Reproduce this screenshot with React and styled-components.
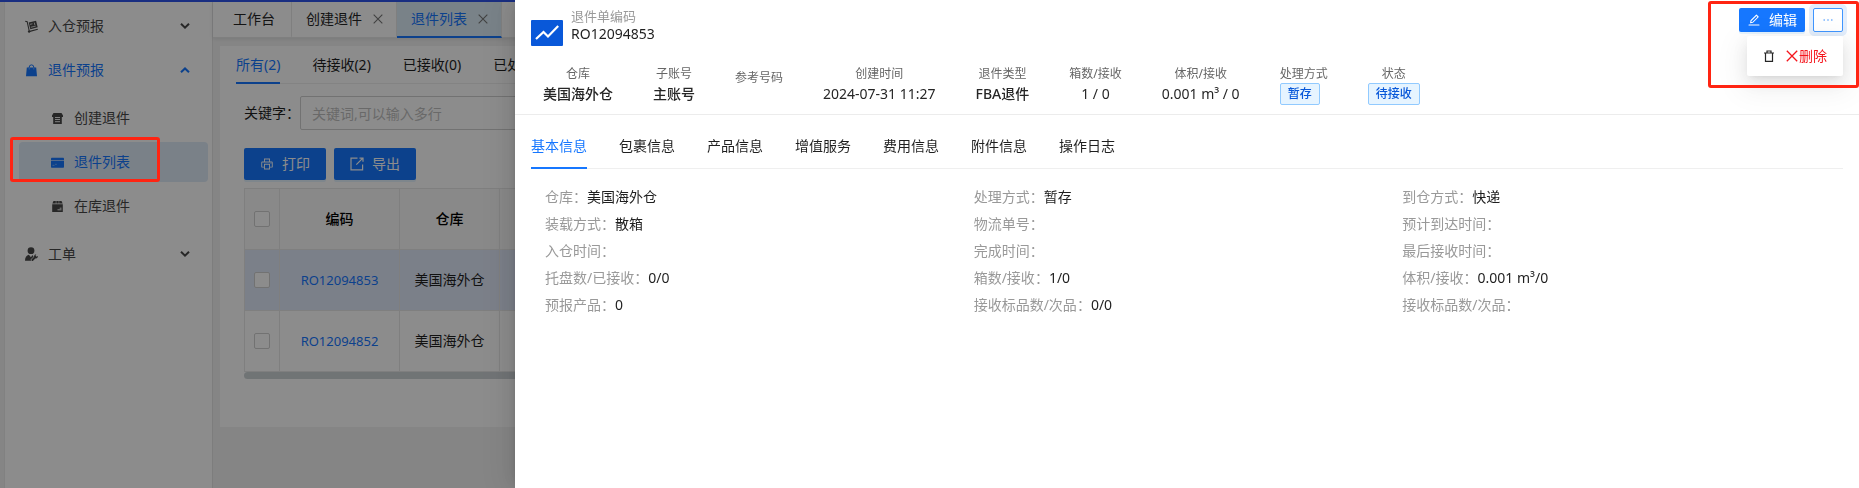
import React, { useState } from "react";
import styled, { createGlobalStyle } from "styled-components";
import { AiOutlineEdit, AiOutlineEllipsis, AiOutlinePrinter } from "react-icons/ai";

const GlobalStyle = createGlobalStyle`
  *, *::before, *::after {
    box-sizing: border-box;
  }

  body {
    margin: 0;
    background: #f3f3f3;
    color: #1f1f1f;
    font-family: "Noto Sans", "Noto Sans CJK SC", sans-serif;
    font-size: 14px;
    line-height: 22px;
  }

  button, input {
    font: inherit;
  }

  svg {
    display: block;
    flex: none;
  }
`;

const Shell = styled.div`
  display: flex;
  min-height: 100vh;
  overflow: hidden;
  border-top: 2px solid #2f54eb;
`;

/* ---------- sidebar ---------- */

const Sidebar = styled.nav`
  flex: none;
  width: 209px;
  margin-left: 4px;
  padding: 4px 4px 0 14px;
  background: #fff;
  border-left: 1px solid #ececec;
  border-right: 1px solid #e4e4e4;
`;

const Menu = styled.ul`
  display: flex;
  flex-direction: column;
  gap: 4px;
  margin: 0;
  padding: ${(p) => (p.$sub ? "8px 0 4px" : "0")};
  list-style: none;
`;

const MenuItem = styled.li`
  position: relative;
`;

const MenuGroup = styled.button`
  display: flex;
  align-items: center;
  width: 100%;
  height: 40px;
  padding: 0 18px 0 6px;
  border: 0;
  background: none;
  color: ${(p) => (p.$open ? "#1677ff" : "#484848")};
  cursor: pointer;

  span {
    flex: 1;
    margin-left: 10px;
    text-align: left;
  }
`;

const MenuLink = styled.a`
  display: flex;
  align-items: center;
  gap: 10px;
  height: 40px;
  padding-left: 32px;
  border-radius: 4px;
  background: ${(p) => (p.$active ? "#deebf8" : "none")};
  color: ${(p) => (p.$active ? "#1677ff" : "#484848")};
  text-decoration: none;
`;

/* red frame drawn above everything to point at a part of the page */
const Highlight = styled.div`
  position: absolute;
  z-index: 30;
  border: 3px solid #ff2412;
  border-radius: 3px;
  pointer-events: none;
`;

const MenuHighlight = styled(Highlight)`
  top: -5px;
  bottom: 0;
  left: -9px;
  right: 48px;
`;

const ActionHighlight = styled(Highlight)`
  top: -7px;
  bottom: -56px;
  left: -31px;
  right: -16px;
`;

/* ---------- page behind the drawer ---------- */

const Main = styled.main`
  flex: 1;
  min-width: 0;
`;

const PageTabs = styled.div`
  display: flex;
  height: 36px;
  background: #fff;
  border-bottom: 1px solid #e8e8e8;
  box-shadow: 0 1px 4px rgba(0, 21, 41, 0.1);
`;

const PageTab = styled.a`
  display: flex;
  align-items: center;
  gap: 11px;
  height: 36px;
  padding: 0 ${(p) => (p.$closable ? "13px" : "16px")} 0 ${(p) => (p.$closable ? "14px" : "20px")};
  border-right: 1px solid #e8e8e8;
  border-bottom: 2px solid ${(p) => (p.$active ? "#1677ff" : "transparent")};
  background: ${(p) => (p.$active ? "#dcedf7" : "none")};
  color: ${(p) => (p.$active ? "#1677ff" : "#262626")};
  text-decoration: none;
  white-space: nowrap;

  svg {
    color: #777;
  }
`;

const Card = styled.section`
  margin: 8px 8px 0 7px;
  padding: 0 16px 48px;
  background: #fff;
`;

const Tabs = styled.div`
  display: flex;
  gap: 32px;
  border-bottom: 1px solid #efefef;
`;

const Tab = styled.button`
  flex: none;
  margin: 0 0 -1px;
  padding: ${(p) => (p.$roomy ? "20px 0 10px" : "8px 0 6px")};
  border: 0;
  border-bottom: 2px solid ${(p) => (p.$active ? "#1677ff" : "transparent")};
  background: none;
  color: ${(p) => (p.$active ? "#1677ff" : "#1f1f1f")};
  cursor: pointer;
  white-space: nowrap;
`;

const Search = styled.label`
  display: flex;
  align-items: center;
  margin: 12px 8px 0;
  white-space: nowrap;
`;

const SearchInput = styled.input`
  flex: 1;
  min-width: 0;
  height: 34px;
  padding: 0 11px;
  border: 1px solid #d0d0d0;
  border-radius: 2px;
  background: #fff;

  &::placeholder {
    color: #bfbfbf;
    opacity: 1;
  }
`;

const Toolbar = styled.div`
  display: flex;
  gap: 8px;
  margin: 18px 8px 8px;
`;

const PrimaryButton = styled.button`
  display: flex;
  align-items: center;
  justify-content: center;
  gap: 8px;
  height: ${(p) => (p.$small ? "24px" : "32px")};
  padding: 0 ${(p) => (p.$small ? "8px" : "16px")};
  border: 0;
  border-radius: 2px;
  background: #1677ff;
  box-shadow: 0 2px 0 rgba(5, 145, 255, 0.1);
  color: #fff;
  cursor: pointer;
`;

const TableWrap = styled.div`
  margin: 0 8px;
  overflow: hidden;
`;

const Table = styled.table`
  width: 100%;
  min-width: 1300px;
  border-collapse: separate;
  border-spacing: 0;
  table-layout: fixed;
  border-top: 1px solid #e8e8e8;
  border-left: 1px solid #e8e8e8;

  th,
  td {
    height: 61px;
    padding: 0;
    border-right: 1px solid #e8e8e8;
    border-bottom: 1px solid #e8e8e8;
    text-align: center;
  }

  th {
    background: #fafafa;
    color: #000;
    font-weight: 500;
  }

  a {
    color: #1677ff;
    font-size: 13px;
    text-decoration: none;
  }
`;

const Row = styled.tr`
  background: ${(p) => (p.$selected ? "#e1e9fa" : "none")};
`;

const Checkbox = styled.input`
  display: block;
  appearance: none;
  width: 16px;
  height: 16px;
  margin: 0 auto;
  border: 1px solid #cfcfcf;
  border-radius: 2px;
  background: #fff;
`;

const ScrollThumb = styled.div`
  height: 7px;
  border-radius: 4px 0 0 4px;
  background: #cdd3d6;
`;

/* ---------- drawer ---------- */

const Mask = styled.div`
  position: fixed;
  inset: 0;
  z-index: 10;
  background: rgba(0, 0, 0, 0.45);
`;

const Drawer = styled.aside`
  position: fixed;
  top: 0;
  right: 0;
  bottom: 0;
  left: 515px;
  z-index: 20;
  background: #fff;
  box-shadow: -6px 0 16px rgba(0, 0, 0, 0.08), -3px 0 6px -4px rgba(0, 0, 0, 0.12),
    -9px 0 28px 8px rgba(0, 0, 0, 0.05);
`;

const DrawerHeader = styled.header`
  display: flex;
  align-items: flex-start;
  justify-content: space-between;
  padding: 7px 16px 0;
`;

const Title = styled.div`
  display: flex;
  align-items: flex-start;
  gap: 8px;
`;

const Logo = styled.svg`
  width: 32px;
  height: 26px;
  margin-top: 13px;
`;

const TitleText = styled.div`
  display: flex;
  flex-direction: column;
  line-height: 18px;
`;

const TitleLabel = styled.span`
  color: #999;
  font-size: 13px;
`;

const Actions = styled.div`
  position: relative;
  display: flex;
  gap: 8px;
  margin-top: 1px;
`;

const MoreButton = styled.button`
  display: flex;
  align-items: center;
  justify-content: center;
  width: 30px;
  height: 24px;
  padding: 0;
  border: 1px solid #4096ff;
  border-radius: 2px;
  background: #fff;
  box-shadow: 0 0 0 4px #e3eefc;
  color: #4096ff;
  cursor: pointer;
`;

const Dropdown = styled.div`
  position: absolute;
  top: 28px;
  right: 0;
  z-index: 1;
  padding: 4px;
  border-radius: 2px;
  background: #fff;
  box-shadow: 0 6px 16px rgba(0, 0, 0, 0.08), 0 3px 6px -4px rgba(0, 0, 0, 0.12),
    0 9px 28px 8px rgba(0, 0, 0, 0.05);
`;

const DropdownItem = styled.button`
  display: flex;
  align-items: center;
  justify-content: space-between;
  width: 88px;
  height: 32px;
  padding: 0 12px;
  border: 0;
  background: none;
  color: #f5151c;
  cursor: pointer;

  span {
    display: flex;
    align-items: center;
    gap: 1px;
  }
`;

const Stats = styled.dl`
  display: flex;
  gap: 40px;
  height: 69px;
  margin: 0;
  padding: 18px 28px 0;
  border-bottom: 1px solid #ececec;
  white-space: nowrap;
`;

const Stat = styled.div`
  padding-top: ${(p) => (p.$empty ? "5px" : "1px")};
  text-align: center;

  dt {
    color: #666;
    font-size: 12px;
    line-height: 18px;
  }

  dd {
    display: flex;
    justify-content: ${(p) => (p.$start ? "flex-start" : "center")};
    margin: 0;
    color: #262626;
    font-weight: ${(p) => (p.$strong ? 500 : 400)};
  }
`;

const Tag = styled.span`
  padding: 0 7px;
  border: 1px solid #91caff;
  border-radius: 2px;
  background: #e6f4ff;
  color: #0958d9;
  font-size: 12px;
  font-weight: 500;
  line-height: 20px;
`;

const DrawerBody = styled.div`
  padding: 0 16px;
`;

const Details = styled.dl`
  display: grid;
  grid-template-columns: repeat(3, 1fr);
  grid-auto-rows: 27px;
  margin: 14px 0 0;
  padding: 0 12px 0 14px;
`;

const Detail = styled.div`
  display: flex;
  align-items: center;

  dt {
    color: #999;
  }

  dd {
    margin: 0;
  }
`;

const Chevron = ({ up }) => (
  <svg width="10" height="6" viewBox="0 0 10 6" fill="none" stroke="currentColor" strokeWidth="2">
    <path d={up ? "M1 5.2 5 1.4l4 3.8" : "M1 .8 5 4.6 9 .8"} />
  </svg>
);

const TruckIcon = () => (
  <svg width="13" height="13" viewBox="0 0 12 12" fill="none" stroke="currentColor">
    <path d="M.2 1.2 2 1.6 4 10.6" strokeWidth="1" />
    <path d="m3.4 2.3 6.8-1.7 1.5 6.2-6.8 1.7z" fill="currentColor" stroke="none" />
    <path d="m4.6 4 2.3-.5M8.6 2.4l.5 2.3M5.4 6.7l4.5-1.1" stroke="#fff" strokeWidth=".7" />
    <path d="m4.4 10.5 7.4-2" strokeWidth="1.1" />
    <circle cx="3.8" cy="10.7" r="1.1" fill="currentColor" stroke="none" />
  </svg>
);

const BagIcon = () => (
  <svg width="13" height="13" viewBox="0 0 13 13">
    <path d="M1.8 3.500h9.400l.8 8.700H1z" fill="currentColor" />
    <path d="M4.200 5.500V3.200a2.300 2.300 0 0 1 4.600 0v2.300" fill="none" stroke="currentColor" />
    <path d="M4.200 3.800v1.700M8.800 3.800v1.700" stroke="#9cc4ff" strokeWidth=".7" />
  </svg>
);

const StoreIcon = () => (
  <svg width="13" height="13" viewBox="0 0 13 13" fill="currentColor">
    <path d="M2.500 1h8L12 3.500V5h-1.200v7H2.200V5H1V3.500z" />
    <path d="M4 5.500h5M4 7.500h5M4 9.700h5" stroke="#fff" strokeWidth=".9" />
  </svg>
);

const CardIcon = () => (
  <svg width="13" height="13" viewBox="0 0 13 13" fill="currentColor">
    <rect y="1.700" width="13" height="10" rx=".8" />
    <path d="M0 4.500h13" stroke="#a9cbfb" strokeWidth=".9" />
    <path d="M1.500 9.300h2M4.200 8.300h1.500" stroke="#a9cbfb" strokeWidth=".7" />
  </svg>
);

const StockIcon = () => (
  <svg width="13" height="13" viewBox="0 0 13 13" fill="currentColor">
    <path d="M2.500 1h2.300v2.600H1.300zM5.300 1h2.400v2.600H5.300zM8.200 1h2.300l1.200 2.600H8.200zM1.200 4.200h10.600V12H1.200z" />
    <path d="M6.500 9.800h4M8.700 8.200h1.800" stroke="#fff" strokeWidth=".9" />
  </svg>
);

const WorkerIcon = () => (
  <svg width="13" height="14" viewBox="0 0 13 14" fill="currentColor">
    <circle cx="6" cy="3.700" r="3.400" />
    <path d="M0 13.800c0-3.300 1.300-5.400 3.900-6l2 2.400 1.700-2.100.9 1.700-2.900 2.800.5 1.200z" />
    <path d="m7.400 13 2.900-3" stroke="currentColor" strokeWidth="1.900" strokeLinecap="round" />
    <path d="M11.300 7.200 10.500 8.800l.9.900 1.500-.8c.3 1.700-1.100 3-2.700 2.400C8.300 10.500 9 7.300 11.300 7.200z" />
  </svg>
);

const ExportIcon = () => (
  <svg width="14" height="14" viewBox="0 0 14 14" fill="none" stroke="currentColor" strokeWidth="1.200">
    <path d="M7.500 1.200H1v11.600h11.600V7.500M6.300 7.700l6-6M9.500 1.200h3.500v3.500" />
  </svg>
);

const TrashIcon = () => (
  <svg width="12" height="12" viewBox="0 0 12 12" fill="none" stroke="#262626" strokeWidth="1.200">
    <path d="M1 3h10M2.500 3v8.400h7V3M4 3V1h4v2" />
  </svg>
);

const CrossIcon = ({ size = 12 }) => (
  <svg width={size} height={size} viewBox="0 0 12 12" stroke="currentColor" strokeWidth="1.300">
    <path d="m.8.8 10.400 10.400M11.200.8.8 11.200" />
  </svg>
);

const subMenu = [
  { label: "创建退件", icon: <StoreIcon /> },
  { label: "退件列表", icon: <CardIcon />, active: true },
  { label: "在库退件", icon: <StockIcon /> },
];

const listTabs = ["所有(2)", "待接收(2)", "已接收(0)", "已处理(0)"];

const orders = [
  { code: "RO12094853", warehouse: "美国海外仓", selected: true },
  { code: "RO12094852", warehouse: "美国海外仓" },
];

const stats = [
  { label: "仓库", value: "美国海外仓", strong: true },
  { label: "子账号", value: "主账号", strong: true },
  { label: "参考号码" },
  { label: "创建时间", value: "2024-07-31 11:27" },
  { label: "退件类型", value: "FBA退件", strong: true },
  { label: "箱数/接收", value: "1 / 0" },
  { label: "体积/接收", value: "0.001 m³ / 0" },
  { label: "处理方式", value: "暂存", tag: true },
  { label: "状态", value: "待接收", tag: true },
];

const drawerTabs = [
  "基本信息",
  "包裹信息",
  "产品信息",
  "增值服务",
  "费用信息",
  "附件信息",
  "操作日志",
];

const details = [
  ["仓库", "美国海外仓"],
  ["处理方式", "暂存"],
  ["到仓方式", "快递"],
  ["装载方式", "散箱"],
  ["物流单号", ""],
  ["预计到达时间", ""],
  ["入仓时间", ""],
  ["完成时间", ""],
  ["最后接收时间", ""],
  ["托盘数/已接收", "0/0"],
  ["箱数/接收", "1/0"],
  ["体积/接收", "0.001 m³/0"],
  ["预报产品", "0"],
  ["接收标品数/次品", "0/0"],
  ["接收标品数/次品", ""],
];

const SideMenu = () => (
  <Sidebar>
    <Menu>
      <MenuItem>
        <MenuGroup>
          <TruckIcon />
          <span>入仓预报</span>
          <Chevron />
        </MenuGroup>
      </MenuItem>
      <MenuItem>
        <MenuGroup $open>
          <BagIcon />
          <span>退件预报</span>
          <Chevron up />
        </MenuGroup>
        <Menu $sub>
          {subMenu.map((item) => (
            <MenuItem key={item.label}>
              <MenuLink href="#" $active={item.active}>
                {item.icon}
                {item.label}
              </MenuLink>
              {item.active && <MenuHighlight />}
            </MenuItem>
          ))}
        </Menu>
      </MenuItem>
      <MenuItem>
        <MenuGroup>
          <WorkerIcon />
          <span>工单</span>
          <Chevron />
        </MenuGroup>
      </MenuItem>
    </Menu>
  </Sidebar>
);

const ReturnList = () => {
  const [active, setActive] = useState(listTabs[0]);

  return (
    <Main>
      <PageTabs>
        <PageTab href="#">工作台</PageTab>
        <PageTab href="#" $closable>
          创建退件
          <CrossIcon size={10} />
        </PageTab>
        <PageTab href="#" $closable $active>
          退件列表
          <CrossIcon size={10} />
        </PageTab>
      </PageTabs>
      <Card>
        <Tabs>
          {listTabs.map((tab) => (
            <Tab key={tab} $active={tab === active} onClick={() => setActive(tab)}>
              {tab}
            </Tab>
          ))}
        </Tabs>
        <Search>
          关键字：
          <SearchInput type="text" placeholder="关键词,可以输入多行" />
        </Search>
        <Toolbar>
          <PrimaryButton>
            <AiOutlinePrinter size={14} />
            打印
          </PrimaryButton>
          <PrimaryButton>
            <ExportIcon />
            导出
          </PrimaryButton>
        </Toolbar>
        <TableWrap>
          <Table>
            <colgroup>
              <col width="35" />
              <col width="120" />
              <col width="100" />
              <col />
            </colgroup>
            <thead>
              <tr>
                <th>
                  <Checkbox type="checkbox" aria-label="全选" />
                </th>
                <th>编码</th>
                <th>仓库</th>
                <th />
              </tr>
            </thead>
            <tbody>
              {orders.map((order) => (
                <Row key={order.code} $selected={order.selected}>
                  <td>
                    <Checkbox type="checkbox" aria-label={order.code} />
                  </td>
                  <td>
                    <a href="#">{order.code}</a>
                  </td>
                  <td>{order.warehouse}</td>
                  <td />
                </Row>
              ))}
            </tbody>
          </Table>
          <ScrollThumb />
        </TableWrap>
      </Card>
    </Main>
  );
};

const ReturnDrawer = () => {
  const [active, setActive] = useState(drawerTabs[0]);

  return (
    <Drawer>
      <DrawerHeader>
        <Title>
          <Logo viewBox="0 0 32 26">
            <rect width="32" height="26" rx="1" fill="#0958d9" />
            <path d="m5 19 7.500-7 4.500 4.500L27.200 6" fill="none" stroke="#fff" strokeWidth="2.200" />
          </Logo>
          <TitleText>
            <TitleLabel>退件单编码</TitleLabel>
            <span>RO12094853</span>
          </TitleText>
        </Title>
        <Actions>
          <PrimaryButton $small>
            <AiOutlineEdit size={14} />
            编辑
          </PrimaryButton>
          <MoreButton aria-label="更多">
            <AiOutlineEllipsis size={14} />
          </MoreButton>
          <Dropdown>
            <DropdownItem>
              <TrashIcon />
              <span>
                <CrossIcon />
                删除
              </span>
            </DropdownItem>
          </Dropdown>
          <ActionHighlight />
        </Actions>
      </DrawerHeader>
      <Stats>
        {stats.map((stat) => (
          <Stat
            key={stat.label}
            $empty={!stat.value}
            $start={stat.label === "处理方式"}
            $strong={stat.strong}
          >
            <dt>{stat.label}</dt>
            <dd>{stat.tag ? <Tag>{stat.value}</Tag> : stat.value}</dd>
          </Stat>
        ))}
      </Stats>
      <DrawerBody>
        <Tabs>
          {drawerTabs.map((tab) => (
            <Tab key={tab} $roomy $active={tab === active} onClick={() => setActive(tab)}>
              {tab}
            </Tab>
          ))}
        </Tabs>
        <Details>
          {details.map(([label, value], index) => (
            <Detail key={index}>
              <dt>{label}：</dt>
              <dd>{value}</dd>
            </Detail>
          ))}
        </Details>
      </DrawerBody>
    </Drawer>
  );
};

const App = () => (
  <>
    <GlobalStyle />
    <Shell>
      <SideMenu />
      <ReturnList />
    </Shell>
    <Mask />
    <ReturnDrawer />
  </>
);

export default App;
